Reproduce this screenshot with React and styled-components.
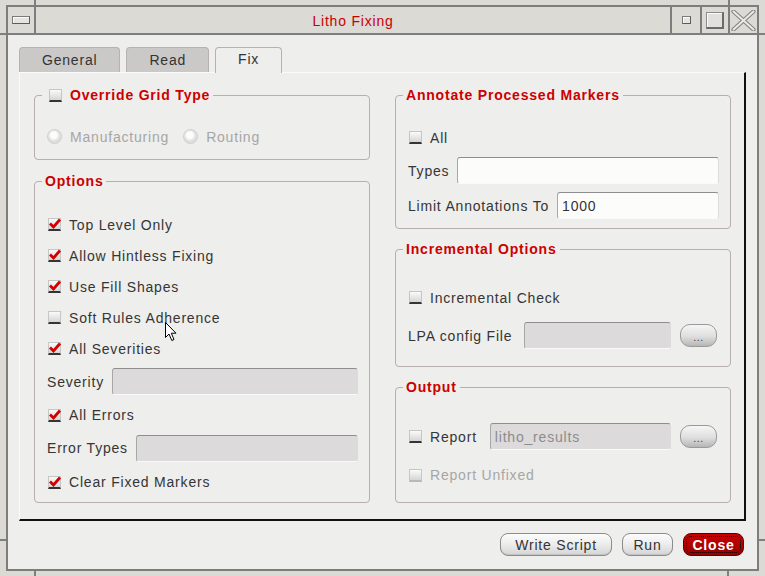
import React from 'react';
import styled, { createGlobalStyle } from 'styled-components';

const GlobalStyle = createGlobalStyle`
  * { box-sizing: border-box; }
  html, body { margin: 0; padding: 0; width: 765px; height: 576px; overflow: hidden; background: #dcdad5; }
  body {
    font-family: "Liberation Sans", Arial, Helvetica, sans-serif;
    font-size: 14px;
    letter-spacing: 0.8px;
    color: #353535;
  }
`;

const Frame = styled.div`
  position: relative;
  width: 765px;
  height: 576px;
  padding: 5px 6px 5px 6px;
  display: flex;
  background: #dcdad5;
`;

const Tick = styled.span`
  position: absolute;
  background: #7f7f7f;
  left: ${p => p.$x}px;
  top: ${p => p.$y}px;
  width: ${p => p.$w}px;
  height: ${p => p.$h}px;
`;

const Window = styled.div`
  flex: 1;
  display: flex;
  flex-direction: column;
  border: 2px solid #7d7d7d;
  min-width: 0;
`;

const TitleBar = styled.div`
  display: flex;
  height: 28px;
  flex: none;
  background: #dcdad5;
  border-bottom: 2px solid #7d7d7d;
`;

const TitleCell = styled.div`
  width: ${p => p.$w}px;
  flex: none;
  display: flex;
  align-items: center;
  justify-content: center;
  ${p => (p.$left ? 'border-right: 2px solid #7d7d7d;' : 'border-left: 2px solid #7d7d7d;')}
`;

const Title = styled.div`
  flex: 1;
  display: flex;
  align-items: center;
  justify-content: center;
  color: #c80000;
  padding-top: 2px;
`;

const BarIcon = styled.span`
  display: block;
  width: ${p => p.$w}px;
  height: ${p => p.$h}px;
  border: 1px solid #7a7a7a;
  border-right-color: #5c5c5c;
  border-bottom-color: #5c5c5c;
  background: #e6e4e0;
  box-shadow: inset 1px 1px 0 #fbfbfb;
`;

const MaxIcon = styled.span`
  display: block;
  width: 18px;
  height: 17px;
  border: 1px solid #8a8a8a;
  border-right: 2px solid #6a6a6a;
  border-bottom: 2px solid #6a6a6a;
  background: #e2e0dc;
  box-shadow: inset 1px 1px 0 #fafafa;
`;

const CloseGlyph = () => (
  <svg width="25" height="21" viewBox="0 0 25 21">
    <path d="M2.5 1.5 L22.5 19.5 M22.5 1.5 L2.5 19.5" fill="none" stroke="#858585" strokeWidth="4.2" strokeLinecap="round" />
    <path d="M2.5 1.5 L22.5 19.5 M22.5 1.5 L2.5 19.5" fill="none" stroke="#ebe9e5" strokeWidth="2" strokeLinecap="round" />
  </svg>
);

const Body = styled.div`
  flex: 1;
  display: flex;
  flex-direction: column;
  background: #eeeeec;
  padding: 12px 11px 13px 11px;
  min-height: 0;
`;

const TabBar = styled.div`
  display: flex;
  gap: 6px;
  height: 25px;
  flex: none;
  align-items: flex-start;
`;

const Tab = styled.div`
  height: ${p => (p.$active ? 26 : 25)}px;
  margin-bottom: ${p => (p.$active ? -1 : 0)}px;
  padding: 0 22px ${p => (p.$active ? 3 : 0)}px 22px;
  display: flex;
  align-items: center;
  justify-content: center;
  border: 1px solid #b9b0b0;
  border-bottom: none;
  border-radius: 4px 4px 0 0;
  background: ${p => (p.$active ? '#eeeeec' : '#cbc9c7')};
  color: #333;
  position: relative;
  z-index: ${p => (p.$active ? 1 : 0)};
`;

const Panel = styled.div`
  flex: 1;
  min-height: 0;
  display: grid;
  grid-template-columns: 1fr 1fr;
  column-gap: 25px;
  padding: 14px 13px 16px 14px;
  border-top: 1px solid #fbfbfb;
  border-left: 1px solid #fbfbfb;
  border-right: 2px solid #111;
  border-bottom: 2px solid #111;
  background: #eeeeec;
`;

const Column = styled.div`
  display: flex;
  flex-direction: column;
  gap: ${p => p.$gap}px;
  min-width: 0;
`;

const Group = styled.fieldset`
  margin: 0;
  padding: 0;
  min-width: 0;
  height: ${p => p.$h}px;
  flex: none;
  border: 1px solid #b9adad;
  border-radius: 4px;
`;

const Legend = styled.legend`
  margin-left: 7px;
  padding: 0 3px 0 ${p => (p.$check ? 6 : 3)}px;
  height: 16px;
  line-height: 16px;
  display: flex;
  align-items: center;
  font-weight: bold;
  color: #cc0000;
`;

const Content = styled.div`
  display: flex;
  flex-direction: column;
  padding: ${p => p.$pt}px 11px 0 12px;
`;

const Row = styled.div`
  display: flex;
  align-items: center;
  height: ${p => p.$h}px;
  flex: none;
`;

const Label = styled.span`
  white-space: nowrap;
  color: ${p => (p.$muted ? '#a6a6a6' : '#353535')};
`;

const Field = styled.div`
  flex: 1;
  min-width: 0;
  height: 27px;
  margin-left: ${p => p.$ml ?? 8}px;
  border: 1px solid;
  border-color: #8e8e8e #dcdcdc #fafafa #a8a8a8;
  border-radius: 3px;
  background: ${p => (p.$disabled ? '#dcdada' : '#fcfcfb')};
  color: ${p => (p.$disabled ? '#8c8c8c' : '#333')};
  display: flex;
  align-items: center;
  padding-left: 4px;
`;

const CheckBoxBox = styled.span`
  position: relative;
  flex: none;
  width: 13px;
  height: 13px;
  margin: 0 8px 0 1px;
  background: linear-gradient(#fafafa, #d5d5d5);
  border: 1px solid #c6c6c6;
  border-bottom: 2px solid ${p => (p.$disabled ? '#b9b9b9' : '#343434')};
  & > svg { position: absolute; left: -1px; top: -2px; }
`;

const Checkbox = ({ checked, disabled }) => (
  <CheckBoxBox $disabled={disabled}>
    {checked && (
      <svg width="14" height="13" viewBox="0 0 14 13">
        <path d="M2 6.5 L5.5 10 L12 2.5" fill="none" stroke="#d20000" strokeWidth="2.8" />
      </svg>
    )}
  </CheckBoxBox>
);

const Radio = styled.span`
  flex: none;
  width: 15px;
  height: 15px;
  border-radius: 50%;
  margin: 0 8px 0 ${p => p.$ml ?? 0}px;
  border: 1px solid #cfcfcf;
  background: radial-gradient(circle at 45% 40%, #fdfdfd 0 3px, #dedede 6px);
`;

const BrowseButton = styled.button`
  flex: none;
  width: 37px;
  height: 23px;
  margin: 0 2px 0 9px;
  padding: 0 0 3px 0;
  border: 1px solid #9a9a9a;
  border-radius: 10px;
  background: linear-gradient(#f6f6f6, #dedede 55%, #b6b6b6);
  font-family: inherit;
  font-size: 11px;
  letter-spacing: 0.5px;
  line-height: 1;
  color: #444;
  display: flex;
  align-items: flex-end;
  justify-content: center;
`;

const ButtonRow = styled.div`
  display: flex;
  justify-content: flex-end;
  gap: 10px;
  margin-top: 12px;
  padding-right: 2px;
  flex: none;
`;

const PushButton = styled.button`
  width: ${p => p.$w}px;
  height: 23px;
  padding: 0;
  font-family: inherit;
  font-size: 14px;
  letter-spacing: 0.8px;
  border: 1px solid #8c8c8c;
  border-radius: 8px;
  background: linear-gradient(#fcfcfc, #ececec 50%, #d4d4d4);
  box-shadow: inset 0 -1px 0 #c2c2c2;
  color: #333;
`;

const CloseButton = styled(PushButton)`
  border-color: #5a0000;
  background: linear-gradient(#c80000, #ad0000 60%, #950000);
  box-shadow: none;
  color: #fff;
  font-weight: bold;
  outline: 1px dotted #000;
  outline-offset: -4px;
`;

const Cursor = styled.svg`
  position: absolute;
  left: 165px;
  top: 322px;
`;

export default function App() {
  return (
    <>
      <GlobalStyle />
      <Frame>
        <Tick $x={34} $y={0} $w={2} $h={5} />
        <Tick $x={728} $y={0} $w={2} $h={5} />
        <Tick $x={0} $y={33} $w={6} $h={2} />
        <Tick $x={759} $y={33} $w={6} $h={2} />
        <Tick $x={0} $y={539} $w={6} $h={2} />
        <Tick $x={759} $y={539} $w={6} $h={2} />
        <Tick $x={34} $y={571} $w={2} $h={5} />
        <Tick $x={727} $y={571} $w={2} $h={5} />
        <Window>
          <TitleBar>
            <TitleCell $w={28} $left>
              <BarIcon $w={18} $h={8} />
            </TitleCell>
            <Title>Litho Fixing</Title>
            <TitleCell $w={30}>
              <BarIcon $w={9} $h={8} />
            </TitleCell>
            <TitleCell $w={28}>
              <MaxIcon />
            </TitleCell>
            <TitleCell $w={29}>
              <CloseGlyph />
            </TitleCell>
          </TitleBar>
          <Body>
            <TabBar>
              <Tab>General</Tab>
              <Tab>Read</Tab>
              <Tab $active>Fix</Tab>
            </TabBar>
            <Panel>
              <Column $gap={13}>
                <Group $h={73}>
                  <Legend $check>
                    <Checkbox />
                    Override Grid Type
                  </Legend>
                  <Content $pt={18}>
                    <Row $h={31}>
                      <Radio />
                      <Label $muted>Manufacturing</Label>
                      <Radio $ml={14} />
                      <Label $muted>Routing</Label>
                    </Row>
                  </Content>
                </Group>
                <Group $h={330}>
                  <Legend>Options</Legend>
                  <Content $pt={20}>
                    <Row $h={31}><Checkbox checked /><Label>Top Level Only</Label></Row>
                    <Row $h={31}><Checkbox checked /><Label>Allow Hintless Fixing</Label></Row>
                    <Row $h={31}><Checkbox checked /><Label>Use Fill Shapes</Label></Row>
                    <Row $h={31}><Checkbox /><Label>Soft Rules Adherence</Label></Row>
                    <Row $h={31}><Checkbox checked /><Label>All Severities</Label></Row>
                    <Row $h={35}><Label>Severity</Label><Field $disabled /></Row>
                    <Row $h={32}><Checkbox checked /><Label>All Errors</Label></Row>
                    <Row $h={34}><Label>Error Types</Label><Field $disabled /></Row>
                    <Row $h={34}><Checkbox checked /><Label>Clear Fixed Markers</Label></Row>
                  </Content>
                </Group>
              </Column>
              <Column $gap={12}>
                <Group $h={142}>
                  <Legend>Annotate Processed Markers</Legend>
                  <Content $pt={19}>
                    <Row $h={31}><Checkbox /><Label>All</Label></Row>
                    <Row $h={35}><Label>Types</Label><Field /></Row>
                    <Row $h={35}><Label>Limit Annotations To</Label><Field>1000</Field></Row>
                  </Content>
                </Group>
                <Group $h={126}>
                  <Legend>Incremental Options</Legend>
                  <Content $pt={25}>
                    <Row $h={31}><Checkbox /><Label>Incremental Check</Label></Row>
                    <Row $h={45}>
                      <Label>LPA config File</Label>
                      <Field $disabled $ml={12} />
                      <BrowseButton>...</BrowseButton>
                    </Row>
                  </Content>
                </Group>
                <Group $h={124}>
                  <Legend>Output</Legend>
                  <Content $pt={24}>
                    <Row $h={35}>
                      <Checkbox />
                      <Label>Report</Label>
                      <Field $disabled $ml={13}>litho_results</Field>
                      <BrowseButton>...</BrowseButton>
                    </Row>
                    <Row $h={42}><Checkbox disabled /><Label $muted>Report Unfixed</Label></Row>
                  </Content>
                </Group>
              </Column>
            </Panel>
            <ButtonRow>
              <PushButton $w={112}>Write Script</PushButton>
              <PushButton $w={51}>Run</PushButton>
              <CloseButton $w={61}>Close</CloseButton>
            </ButtonRow>
          </Body>
        </Window>
        <Cursor width="13" height="20" viewBox="0 0 13 20">
          <path d="M0.5 0.5 L0.5 15.5 L4 12 L6.8 18.5 L9 17.5 L6.3 11.2 L11 11.2 Z" fill="#fff" stroke="#000" strokeWidth="1" strokeLinejoin="miter" />
        </Cursor>
      </Frame>
    </>
  );
}
